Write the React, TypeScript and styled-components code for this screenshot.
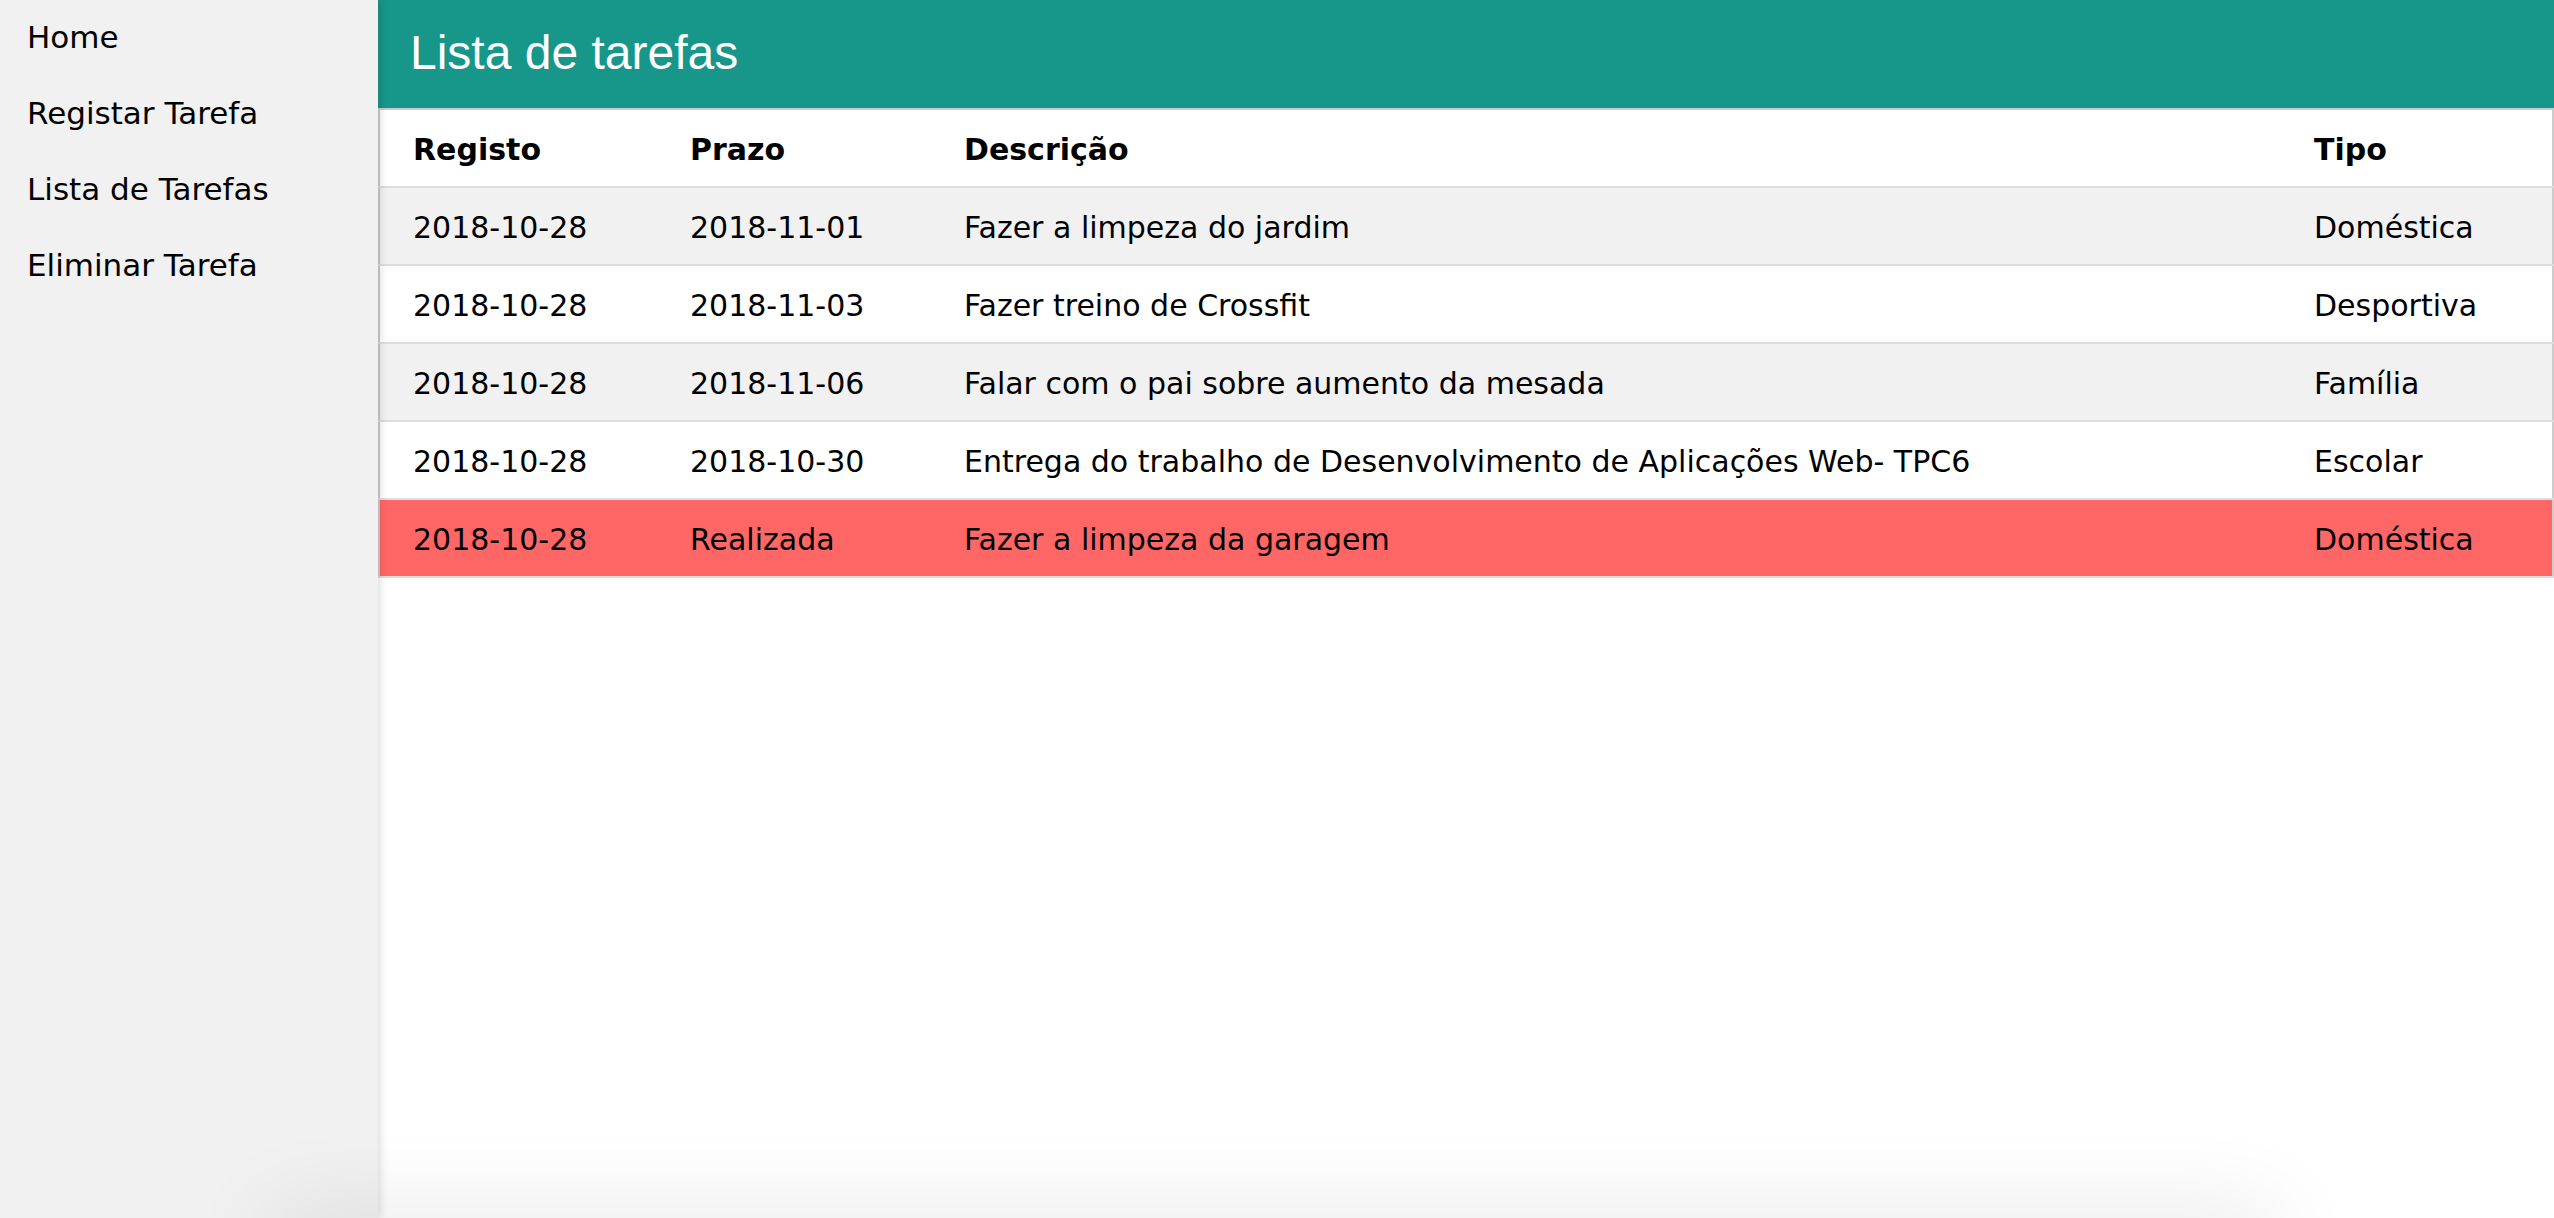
import React from 'react'
import styled, { createGlobalStyle } from 'styled-components'

interface Task {
  registo: string
  prazo: string
  descricao: string
  tipo: string
  done?: boolean
}

const tasks: Task[] = [
  { registo: '2018-10-28', prazo: '2018-11-01', descricao: 'Fazer a limpeza do jardim', tipo: 'Doméstica' },
  { registo: '2018-10-28', prazo: '2018-11-03', descricao: 'Fazer treino de Crossfit', tipo: 'Desportiva' },
  { registo: '2018-10-28', prazo: '2018-11-06', descricao: 'Falar com o pai sobre aumento da mesada', tipo: 'Família' },
  { registo: '2018-10-28', prazo: '2018-10-30', descricao: 'Entrega do trabalho de Desenvolvimento de Aplicações Web- TPC6', tipo: 'Escolar' },
  { registo: '2018-10-28', prazo: 'Realizada', descricao: 'Fazer a limpeza da garagem', tipo: 'Doméstica', done: true },
]

const menu = ['Home', 'Registar Tarefa', 'Lista de Tarefas', 'Eliminar Tarefa']

const GlobalStyle = createGlobalStyle`
  html, body {
    margin: 0;
    padding: 0;
    height: 100%;
    overflow: hidden;
    background: #fff;
  }
  body {
    font-family: "DejaVu Sans", Verdana, sans-serif;
    color: #000;
  }
`

const Page = styled.div`
  display: flex;
  height: 100vh;
`

// barra lateral
const Sidebar = styled.nav`
  width: 378px;
  flex-shrink: 0;
  background: #f1f1f1;
  position: relative;
  z-index: 2;
  box-shadow: 2px 0 8px rgba(0, 0, 0, 0.14);
  display: flex;
  flex-direction: column;
`

const MenuItem = styled.a`
  display: block;
  padding: 15px 27px 17px;
  font-size: 31px;
  line-height: 44px;
  color: #000;
  text-decoration: none;
  cursor: pointer;
`

const Main = styled.main`
  flex: 1;
  background: #fff;
  min-width: 0;
`

const Header = styled.header`
  height: 108px;
  box-sizing: border-box;
  background: #17968a;
  display: flex;
  align-items: center;
  padding: 0 32px 4px;
`

const Title = styled.h1`
  margin: 0;
  font-family: "Liberation Sans", Arial, sans-serif;
  font-weight: 400;
  font-size: 48px;
  color: #fff;
`

const Table = styled.table`
  width: 100%;
  table-layout: fixed;
  border-collapse: collapse;
  border: 2px solid #ccc;
  font-size: 30px;
  line-height: 44px;
`

const Row = styled.tr<{ $striped?: boolean; $done?: boolean }>`
  border-bottom: 2px solid #ddd;
  background: ${({ $striped, $done }) => ($done ? '#ff6666' : $striped ? '#f1f1f1' : '#fff')};
`

const Cell = styled.td`
  padding: 18px 16px 14px;
  text-align: left;
  white-space: nowrap;

  &:first-child {
    padding-left: 33px;
  }
  &:last-child {
    padding-right: 32px;
  }
`

const HeadCell = styled(Cell).attrs({ as: 'th' })`
  font-weight: 700;
`

// sombra no fundo da janela
const BottomShade = styled.div`
  position: fixed;
  left: 270px;
  right: 280px;
  top: 100vh;
  height: 40px;
  box-shadow: 0 0 90px rgba(0, 0, 0, 0.14);
  pointer-events: none;
  z-index: 3;
`

export default function App() {
  return (
    <>
      <GlobalStyle />
      <Page>
        <Sidebar>
          {menu.map((item) => (
            <MenuItem key={item}>{item}</MenuItem>
          ))}
        </Sidebar>
        <Main>
          <Header>
            <Title>Lista de tarefas</Title>
          </Header>
          <Table>
            <colgroup>
              <col style={{ width: 295 }} />
              <col style={{ width: 274 }} />
              <col style={{ width: 1350 }} />
              <col />
            </colgroup>
            <thead>
              <Row>
                <HeadCell>Registo</HeadCell>
                <HeadCell>Prazo</HeadCell>
                <HeadCell>Descrição</HeadCell>
                <HeadCell>Tipo</HeadCell>
              </Row>
            </thead>
            <tbody>
              {tasks.map((t, i) => (
                <Row key={i} $striped={i % 2 === 0} $done={t.done}>
                  <Cell>{t.registo}</Cell>
                  <Cell>{t.prazo}</Cell>
                  <Cell>{t.descricao}</Cell>
                  <Cell>{t.tipo}</Cell>
                </Row>
              ))}
            </tbody>
          </Table>
        </Main>
      </Page>
      <BottomShade />
    </>
  )
}
